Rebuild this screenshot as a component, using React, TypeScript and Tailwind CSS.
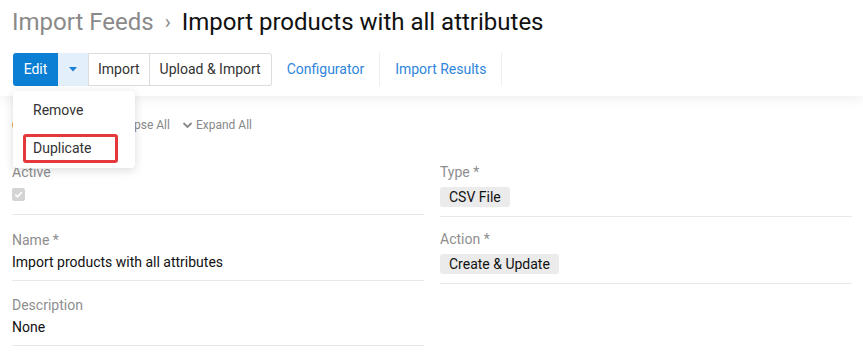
import React from "react";

function Chevron({ up = false }: { up?: boolean }) {
  return (
    <svg width="11" height="10" viewBox="0 0 11 10" className="inline-block" style={{ transform: up ? "rotate(180deg)" : undefined }}>
      <path d="M1.5 3 L5.5 7 L9.5 3" fill="none" stroke="#888" strokeWidth="1.8" />
    </svg>
  );
}

function Field({ label, children }: { label: string; children: React.ReactNode }) {
  return (
    <div className="border-b border-[#e8e8e8] pb-[7px] mb-[14px]">
      <div className="text-[14px] leading-[20px] text-[#8e8e8e]">{label}</div>
      <div className="mt-[1px] text-[14px] leading-[22px] text-[#111]">{children}</div>
    </div>
  );
}

function Badge({ children }: { children: React.ReactNode }) {
  return (
    <span className="inline-block rounded-[3px] bg-[#ebebeb] px-[9px] text-[14px] leading-[20px] text-[#111]">{children}</span>
  );
}

export default function App() {
  return (
    <div className="relative w-[863px] h-[353px] overflow-hidden bg-white" style={{ fontFamily: "Roboto, 'Liberation Sans', sans-serif" }}>
      {/* header */}
      <div className="relative z-10 bg-white px-[12px] pt-[6px] pb-[10px] shadow-[0_4px_10px_rgba(0,0,0,0.06)]">
        <div className="flex items-center text-[24px] leading-[32px]">
          <span className="text-[#8a8a8a]">Import Feeds</span>
          <span className="mx-[11px] text-[#8a8a8a] text-[20px]">›</span>
          <span className="text-[#111]">Import products with all attributes</span>
        </div>
        <div className="mt-[15px] flex items-center h-[33px] text-[14px]">
          <div className="flex h-full ml-[1px]">
            <button className="h-full w-[45px] rounded-l-[3px] bg-[#0b7fd4] text-white">Edit</button>
            <button className="h-full w-[30px] bg-[#e3effb] flex items-center justify-center">
              <svg width="8" height="5" viewBox="0 0 8 5"><path d="M0 0 L8 0 L4 4.5 Z" fill="#1a7fd6" /></svg>
            </button>
            <button className="h-full px-[9px] border border-[#dcdcdc] text-[#333]">Import</button>
            <button className="h-full px-[10px] border border-l-0 border-[#dcdcdc] rounded-r-[3px] text-[#333]">Upload &amp; Import</button>
          </div>
          <div className="flex h-full ml-[3px]">
            <span className="h-full flex items-center pl-[12px] pr-[15px] text-[#2f86dc] border-r border-[#efefef]">Configurator</span>
            <span className="h-full flex items-center px-[15px] text-[#2f86dc] border-r border-[#efefef]">Import Results</span>
          </div>
        </div>
      </div>

      {/* content */}
      <div className="px-[12px] pt-[20px]">
        <div className="flex items-center h-[18px] text-[12px] text-[#888]">
          <span className="inline-block w-[10px] h-[10px] rounded-full bg-[#f0a030]"></span>
          <span className="ml-[71px] flex items-center gap-[3px]"><Chevron up />Collapse All</span>
          <span className="ml-[12px] flex items-center gap-[3px]"><Chevron />Expand All</span>
        </div>
        <div className="mt-[28px] grid grid-cols-2 gap-x-[16px] w-[840px]">
          <div className="w-[412px]">
            <div className="border-b border-[#e8e8e8] pb-[9px] mb-[15px]">
              <div className="text-[14px] leading-[20px] text-[#8e8e8e]">Active</div>
              <div className="mt-[1px] h-[22px] flex items-center">
                <span className="w-[13px] h-[13px] rounded-[2px] bg-[#d4d4d4] flex items-center justify-center">
                  <svg width="9" height="9" viewBox="0 0 10 10"><path d="M1.5 5.2 L4 7.6 L8.6 2.4" fill="none" stroke="white" strokeWidth="1.8" /></svg>
                </span>
              </div>
            </div>
            <Field label="Name *">Import products with all attributes</Field>
            <Field label="Description">None</Field>
          </div>
          <div className="w-[412px]">
            <div className="border-b border-[#e8e8e8] pb-[8px] mb-[12px]">
              <div className="text-[14px] leading-[20px] text-[#8e8e8e]">Type *</div>
              <div className="mt-[4px] leading-[22px]"><Badge>CSV File</Badge></div>
            </div>
            <div className="border-b border-[#e8e8e8] pb-[8px] mb-[12px]">
              <div className="text-[14px] leading-[20px] text-[#8e8e8e]">Action *</div>
              <div className="mt-[4px] leading-[22px]"><Badge>Create &amp; Update</Badge></div>
            </div>
          </div>
        </div>
      </div>

      {/* dropdown */}
      <div className="absolute z-20 left-[13px] top-[91px] w-[122px] h-[77px] rounded-[4px] bg-white shadow-[0_2px_10px_rgba(0,0,0,0.15)] py-[6px] text-[14px] text-[#333]">
        <div className="h-[26px] flex items-center pl-[20px]">Remove</div>
        <div className="mt-[11px] ml-[10px] w-[95px] h-[29px] rounded-[3px] border-[3px] border-[#e5383b] flex items-center pl-[7px]">Duplicate</div>
      </div>
    </div>
  );
}
